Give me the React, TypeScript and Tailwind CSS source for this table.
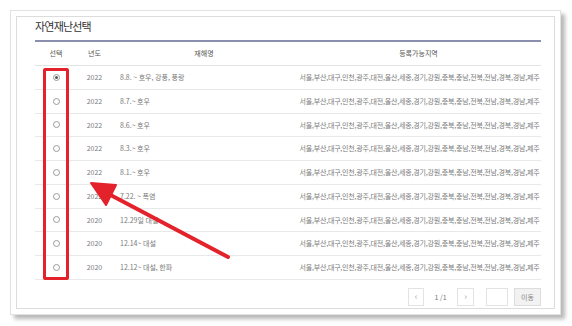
import React from 'react';

const REGIONS = '서울,부산,대구,인천,광주,대전,울산,세종,경기,강원,충북,충남,전북,전남,경북,경남,제주';

const rows = [
  { year: '2022', name: '8.8. ~ 호우, 강풍, 풍랑', checked: true },
  { year: '2022', name: '8.7.~ 호우' },
  { year: '2022', name: '8.6.~ 호우' },
  { year: '2022', name: '8.3.~ 호우' },
  { year: '2022', name: '8.1.~ 호우' },
  { year: '2022', name: '7.22. ~ 폭염' },
  { year: '2020', name: '12.29일 대설' },
  { year: '2020', name: '12.14~ 대설' },
  { year: '2020', name: '12.12~ 대설, 한파' },
];

const Radio: React.FC<{ checked?: boolean }> = ({ checked }) => (
  <span className="flex h-[7px] w-[7px] items-center justify-center rounded-full border border-[#9a9a9a] bg-white">
    {checked && <span className="h-[3px] w-[3px] rounded-full bg-[#555]" />}
  </span>
);

const App: React.FC = () => {
  return (
    <div
      className="h-[326px] w-[572px] bg-white p-[10px] pr-[11px]"
      style={{ fontFamily: '"Noto Sans CJK KR", "Noto Sans", sans-serif' }}
    >
      <div className="h-[305px] w-[551px] border border-[#e2e2e2] bg-white p-[5px] shadow-[4px_4px_4px_rgba(0,0,0,0.28)]">
        <div className="relative h-[293px] border border-[#dcdcdc] pl-[18px] pr-[13px]">
          <h1 className="pt-[1px] text-[11px] leading-[16px] tracking-[-0.8px] text-[#333]">자연재난선택</h1>

          <div className="mt-[6px] border-t-2 border-[#8a8fae]">
            <div className="flex h-[24px] items-center border-b border-[#e3e3e3] text-[7px] text-[#555]">
              <div className="w-[42px] text-center">선택</div>
              <div className="w-[35px] text-center">년도</div>
              <div className="w-[184px] text-center">재해명</div>
              <div className="flex-1 text-center">등록가능지역</div>
            </div>
            {rows.map((r, i) => (
              <div
                key={i}
                className="flex h-[23.75px] items-center border-b border-[#e8e8e8] text-[7px] text-[#7a7a7a]"
              >
                <div className="flex w-[42px] justify-center">
                  <Radio checked={r.checked} />
                </div>
                <div className="w-[35px] text-center">{r.year}</div>
                <div className="w-[184px] pl-[8px]">{r.name}</div>
                <div className="flex-1 whitespace-nowrap pl-[2px] text-center tracking-[-0.2px]">{REGIONS}</div>
              </div>
            ))}
          </div>

          <div className="mt-[8px] flex items-center justify-end gap-[4px] text-[7px] text-[#777]">
            <div className="flex h-[18px] w-[16px] items-center justify-center border border-[#e3e3e3] text-[9px] text-[#aaa]">‹</div>
            <div className="w-[25px] text-center">1 /1</div>
            <div className="flex h-[18px] w-[17px] items-center justify-center border border-[#e3e3e3] text-[9px] text-[#aaa]">›</div>
            <div className="ml-[8px] h-[18px] w-[22px] border border-[#e3e3e3] bg-white" />
            <div className="ml-[2px] flex h-[18px] w-[27px] items-center justify-center border border-[#dcdcdc] bg-[#f2f2f2] text-[#888]">
              이동
            </div>
          </div>

          {/* annotation: red box around the select column */}
          <div className="absolute left-[26px] top-[51px] h-[212px] w-[26px] rounded-[2px] border-[3px] border-[#e3222c]" />

          {/* annotation: arrow */}
          <svg className="absolute left-0 top-0" width="540" height="293" viewBox="0 0 540 293">
            <line x1="211" y1="240" x2="86" y2="174" stroke="#e3222c" strokeWidth="4" strokeLinecap="round" />
            <polygon points="74,166 99,168 89,188" fill="#e3222c" stroke="#e3222c" strokeWidth="2" strokeLinejoin="round" />
          </svg>
        </div>
      </div>
    </div>
  );
};

export default App;
